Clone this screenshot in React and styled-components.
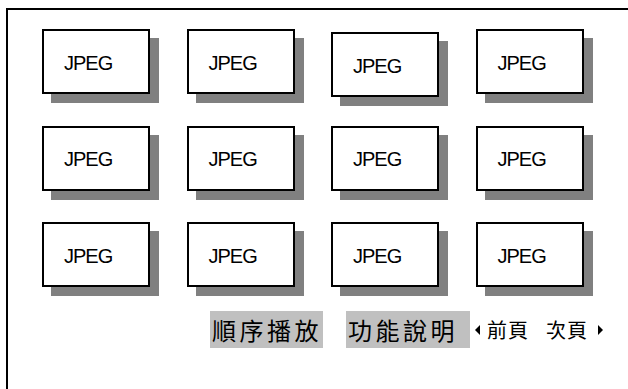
import React from "react";
import styled, { createGlobalStyle } from "styled-components";

const LINE = "#000";
const SHADOW = "#808080";
const BUTTON_BG = "#c0c0c0";

const GlobalStyle = createGlobalStyle`
    html, body {
        margin: 0;
        padding: 0;
        background: #fff;
        overflow: hidden;
    }
    body {
        width: 628px;
        height: 389px;
    }
`;

const Frame = styled.div`
    margin: 8px 0 0 6px;
    width: 622px;
    height: 381px;
    border-top: 2px solid ${LINE};
    border-left: 2px solid ${LINE};
    box-sizing: border-box;
    padding: 19px 0 0 34px;
`;

const Grid = styled.div`
    display: grid;
    grid-template-columns: repeat(4, 108px);
    grid-auto-rows: 65px;
    column-gap: 36.5px;
    row-gap: 31.5px;
    align-items: start;
`;

const Thumb = styled.div`
    box-sizing: border-box;
    width: 108px;
    height: 65px;
    margin-top: ${(p) => (p.$drop ? "3px" : "0")};
    border: 2px solid ${LINE};
    background: #fff;
    box-shadow: 9px 9px 0 ${SHADOW};
    display: flex;
    align-items: center;
    padding: 3px 0 0 20px;
    font-family: "Liberation Sans", Arial, sans-serif;
    font-size: 20px;
    letter-spacing: -1px;
    color: #000;
`;

const Bar = styled.div`
    display: flex;
    align-items: center;
    margin-top: 24px;
    padding-left: 168px;
    font-family: "Noto Sans CJK TC", "Noto Sans", sans-serif;
    color: #000;
`;

const Button = styled.div`
    height: 37px;
    line-height: 37px;
    background: ${BUTTON_BG};
    font-size: 24px;
    letter-spacing: 3.5px;
    padding: 0 ${(p) => p.$padRight}px 0 2px;
    margin-right: ${(p) => p.$gap}px;
`;

const Nav = styled.div`
    display: flex;
    align-items: center;
    font-size: 20px;
    letter-spacing: 1px;
    line-height: 37px;
`;

const NavLabel = styled.span`
    margin: ${(p) => p.$margin};
`;

const Arrow = ({ dir }) => (
    <svg width="6" height="10" viewBox="0 0 6 10" style={{ display: "block" }}>
        {dir === "left" ? (
            <polygon points="5,0 5,10 0,5" fill="#000" />
        ) : (
            <polygon points="0,0 0,10 5,5" fill="#000" />
        )}
    </svg>
);

export default function App() {
    const items = Array.from({ length: 12 }, (_, i) => i);
    return (
        <>
            <GlobalStyle />
            <Frame>
                <Grid>
                    {items.map((i) => (
                        <Thumb key={i} $drop={i === 2}>
                            JPEG
                        </Thumb>
                    ))}
                </Grid>
                <Bar>
                    <Button $padRight={1} $gap={23}>順序播放</Button>
                    <Button $padRight={12} $gap={5}>功能說明</Button>
                    <Nav>
                        <Arrow dir="left" />
                        <NavLabel $margin="0 0 0 6px">前頁</NavLabel>
                        <NavLabel $margin="0 0 0 17px">次頁</NavLabel>
                        <NavLabel $margin="0 0 0 10px">
                            <Arrow dir="right" />
                        </NavLabel>
                    </Nav>
                </Bar>
            </Frame>
        </>
    );
}
